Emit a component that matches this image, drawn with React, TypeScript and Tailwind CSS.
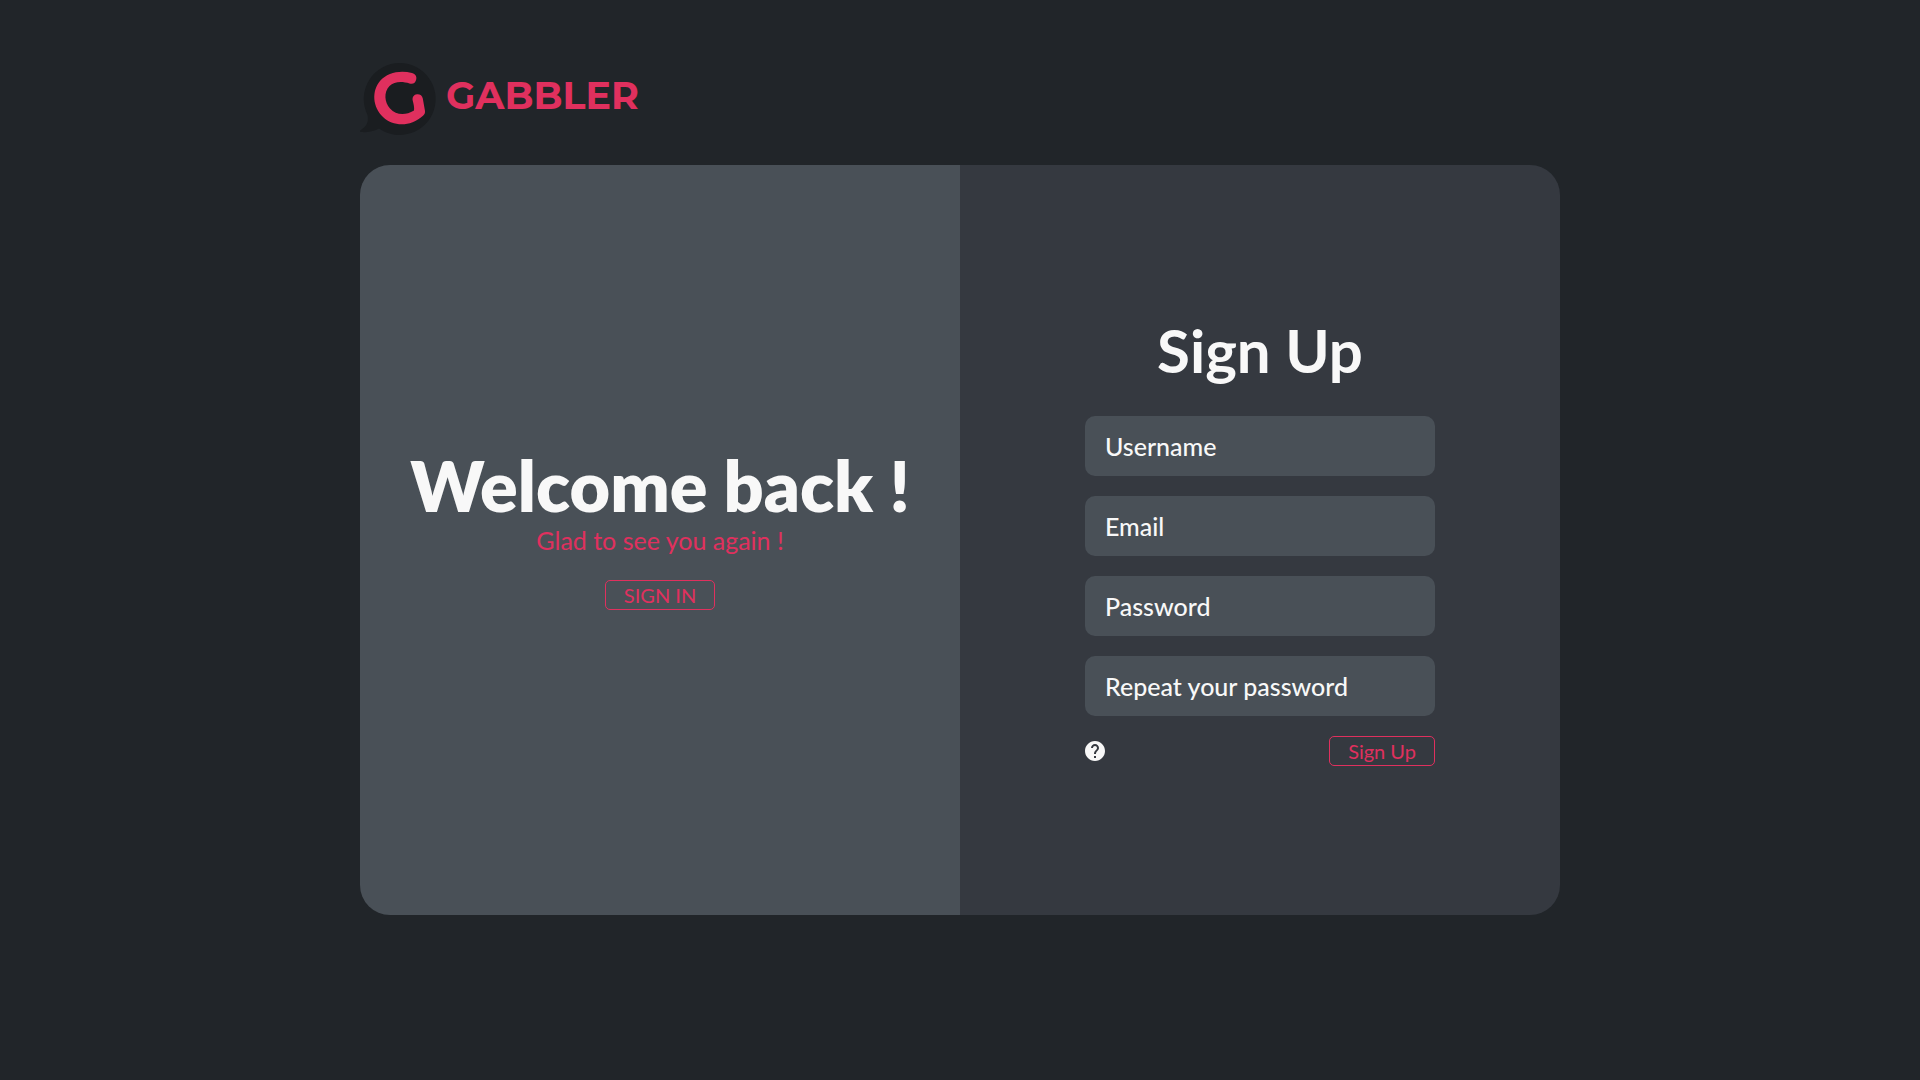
const fields = [
  { id: "username", label: "Username", type: "text" },
  { id: "email", label: "Email", type: "email" },
  { id: "password", label: "Password", type: "password" },
  { id: "repeat-password", label: "Repeat your password", type: "password" },
];

function Logo() {
  return (
    <svg viewBox="0 0 76 72" className="h-[72px] w-[76px]" aria-hidden="true">
      <path
        fill="#1a1d20"
        d="M40 0a36 36 0 1 1-21 65.500C13 69 6 69.500.800 69c-1-.100-1.200-1.200-.300-1.800C6 64 9 60 7.500 52A36 36 0 0 1 40 0Z"
      />
      <path
        fill="#e0305e"
        d="M52 10C55.500 11 57 13.500 56.200 16.500C55.500 20 53 21.500 49.500 20.500C42 18 34 18.500 29.500 23C23.500 29 24.500 39.500 30 45.500C36 52 45 53 54 47.500C54.500 44 53.500 41 52.700 37.500C52 34 54 31.500 57 31.200C60 31 62.300 32.500 62.800 35.500L65 48C65.200 50 64.500 51.500 63 52.800C50 64.500 33 63.500 23 54C12.500 44 11.500 28 20 18C27.500 9.500 40 7 52 10Z"
      />
    </svg>
  );
}

export default function App() {
  return (
    <div className="min-h-screen bg-[#212529] px-6 pt-[63px] pb-12 font-['Lato',sans-serif] text-[#f8f8f8]">
      <div className="mx-auto max-w-[1200px]">
        <header className="flex items-center gap-[10px]">
          <Logo />
          <span className="pb-[6px] font-['Montserrat','DejaVu_Sans',sans-serif] text-[38px] leading-none font-bold text-[#e0305e]">
            GABBLER
          </span>
        </header>
        <main className="mt-[30px] grid min-h-[750px] grid-cols-2 overflow-hidden rounded-[30px]">
          <section className="flex flex-col items-center justify-center bg-[#495057] pb-7">
            <h1 className="text-[70px] leading-[86px] font-extrabold">Welcome back !</h1>
            <p className="text-[25px] leading-6 text-[#e0305e]">Glad to see you again !</p>
            <button
              type="button"
              className="mt-7 h-[30px] rounded-[5px] border border-[#e0305e] px-[18px] text-[20px] leading-none text-[#e0305e]"
            >
              SIGN IN
            </button>
          </section>
          <section className="flex items-center justify-center bg-[#353940]">
            <form className="flex w-[350px] flex-col gap-5">
              <h2 className="mb-[10px] text-center text-[60px] leading-[72px] font-bold">Sign Up</h2>
              {fields.map((f) => (
                <input
                  key={f.id}
                  id={f.id}
                  type={f.type}
                  aria-label={f.label}
                  placeholder={f.label}
                  className="h-[60px] w-full rounded-[10px] bg-[#495057] px-5 text-[25px] font-medium placeholder:text-[#f8f8f8]"
                />
              ))}
              <div className="flex items-center justify-between">
                <button type="button" aria-label="Help">
                  <svg viewBox="2 2 20 20" className="size-5" fill="#f8f8f8" aria-hidden="true">
                    <path d="M12 2C6.480 2 2 6.480 2 12s4.480 10 10 10 10-4.480 10-10S17.520 2 12 2zm1 17h-2v-2h2v2zm2.070-7.750l-.900.920C13.450 12.900 13 13.500 13 15h-2v-.500c0-1.100.450-2.100 1.170-2.830l1.240-1.260c.370-.360.590-.860.590-1.410 0-1.100-.900-2-2-2s-2 .900-2 2H8c0-2.210 1.790-4 4-4s4 1.790 4 4c0 .880-.360 1.680-.930 2.250z" />
                  </svg>
                </button>
                <button
                  type="submit"
                  className="h-[30px] rounded-[5px] border border-[#e0305e] px-[18px] text-[20px] leading-none text-[#e0305e]"
                >
                  Sign Up
                </button>
              </div>
            </form>
          </section>
        </main>
      </div>
    </div>
  );
}
